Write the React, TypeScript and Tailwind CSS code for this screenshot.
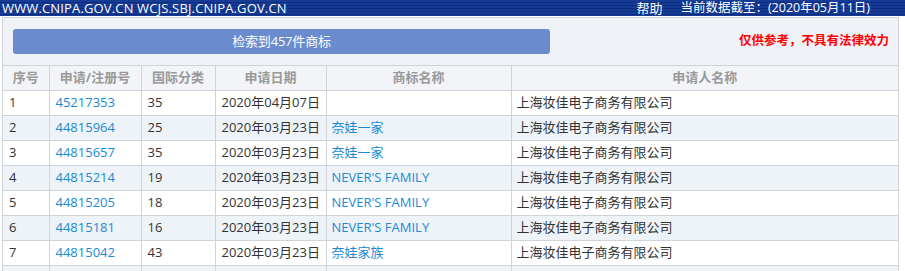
import React from "react";

const rows = [
  ["1", "45217353", "35", "2020年04月07日", "", "上海妆佳电子商务有限公司"],
  ["2", "44815964", "25", "2020年03月23日", "奈娃一家", "上海妆佳电子商务有限公司"],
  ["3", "44815657", "35", "2020年03月23日", "奈娃一家", "上海妆佳电子商务有限公司"],
  ["4", "44815214", "19", "2020年03月23日", "NEVER'S FAMILY", "上海妆佳电子商务有限公司"],
  ["5", "44815205", "18", "2020年03月23日", "NEVER'S FAMILY", "上海妆佳电子商务有限公司"],
  ["6", "44815181", "16", "2020年03月23日", "NEVER'S FAMILY", "上海妆佳电子商务有限公司"],
  ["7", "44815042", "43", "2020年03月23日", "奈娃家族", "上海妆佳电子商务有限公司"],
  ["", "", "", "", "", ""],
];

const font = { fontFamily: '"Segoe UI", "Open Sans", "Noto Sans CJK SC", sans-serif' };

export default function App() {
  return (
    <div className="w-[905px] h-[271px] overflow-hidden bg-white text-[13px]" style={font}>
      <div className="h-[16px] flex items-center justify-between pl-[2px] pr-[35px] text-white text-[13px] leading-none bg-[repeating-linear-gradient(180deg,#163c96_0px,#163c96_2px,#0d2c80_2px,#0d2c80_3px)]">
        <span className="tracking-[0.15px]">WWW.CNIPA.GOV.CN WCJS.SBJ.CNIPA.GOV.CN</span>
        <span className="flex items-center gap-[18px]">
          <span>帮助</span>
          <span className="text-[12.5px]">当前数据截至：(2020年05月11日)</span>
        </span>
      </div>
      <div className="ml-[2px] w-[897px] mt-[1px] border-l border-r border-t border-[#cfd3d8] bg-[#eff3f8]">
        <div className="h-[47px] flex items-center justify-between pl-[10px] pr-[9px]">
          <div className="w-[537px] h-[25px] rounded-[3px] bg-[#6a8bcd] text-white flex items-center justify-center">
            <span className="tracking-[-0.2px]">检索到457件商标</span>
          </div>
          <div className="text-[#ff0000] font-bold text-[12.5px]">仅供参考，不具有法律效力</div>
        </div>
        <table className="w-[896px] border-collapse table-fixed">
          <colgroup>
            <col className="w-[46px]" />
            <col className="w-[92px]" />
            <col className="w-[74px]" />
            <col className="w-[111px]" />
            <col className="w-[185px]" />
            <col />
          </colgroup>
          <thead>
            <tr className="h-[25px] bg-[#f2f4f7]">
              {["序号", "申请/注册号", "国际分类", "申请日期", "商标名称", "申请人名称"].map((h, i) => (
                <th
                  key={h}
                  className={`border border-[#d0d3d8] font-bold text-[#999999] text-center p-0 ${i === 0 ? "border-l-0" : ""}`}
                >
                  {h}
                </th>
              ))}
            </tr>
          </thead>
          <tbody>
            {rows.map((r, idx) => (
              <tr key={idx} className={`h-[25px] ${idx % 2 === 0 ? "bg-white" : "bg-[#eef3f8]"}`}>
                <td className="border border-[#d0d3d8] border-l-0 pl-[6px] text-[#333333]">{r[0]}</td>
                <td className="border border-[#d0d3d8] pl-[6px] text-[#1a8ad4]">{r[1]}</td>
                <td className="border border-[#d0d3d8] pl-[6px] text-[#333333]">{r[2]}</td>
                <td className="border border-[#d0d3d8] pl-[6px] text-[#333333]">{r[3]}</td>
                <td className="border border-[#d0d3d8] pl-[5px] text-[#1a8ad4]">{r[4]}</td>
                <td className="border border-[#d0d3d8] pl-[5px] text-[#333333]">{r[5]}</td>
              </tr>
            ))}
          </tbody>
        </table>
      </div>
    </div>
  );
}
